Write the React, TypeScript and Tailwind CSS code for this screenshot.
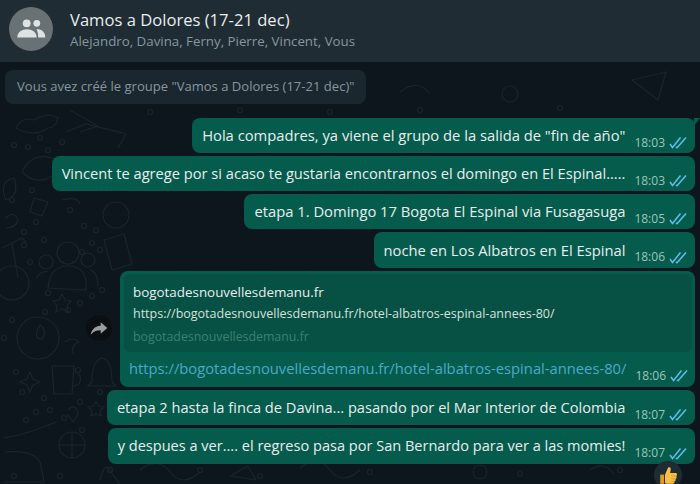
const font = { fontFamily: '"Open Sans", "Liberation Sans", sans-serif' };

function Ticks() {
    return (
        <svg width="19" height="13" viewBox="0 0 19 13" fill="none" stroke="#5cc0ea" strokeWidth="1.5" className="shrink-0">
            <path d="M1 8 L3.500 11.500 L11.500 1.500" />
            <path d="M7 11 L8 11.800 L17 1.500" />
        </svg>
    );
}

function Meta({ time }: { time: string }) {
    return (
        <div className="flex items-center gap-[4px] text-[12px] leading-none text-[#9cc4b9] ml-[9px] mt-[14px] shrink-0">
            <span>{time}</span>
            <Ticks />
        </div>
    );
}

function Bubble({ text, time, size = 'text-[14.75px]', height = 'h-[35px]' }: { text: string; time: string; size?: string; height?: string }) {
    return (
        <div className={`flex items-center ${height} ${size} rounded-[8px] bg-[#065c4c] pl-[10px] pr-[7px] text-[#e9edef] whitespace-nowrap`}>
            <span>{text}</span>
            <Meta time={time} />
        </div>
    );
}

const dots: [number, number][] = [
    [14, 145], [28, 147], [40, 138], [62, 142], [48, 150], [32, 190], [12, 200], [70, 210], [24, 232], [36, 222],
    [24, 245], [44, 240], [84, 226], [96, 230], [82, 252], [30, 262], [100, 250], [92, 243], [48, 293], [45, 312],
    [68, 310], [80, 303], [92, 296], [102, 290], [12, 320], [4, 338], [78, 370], [16, 372], [22, 392], [44, 398],
    [50, 410], [36, 412], [26, 420], [64, 418], [80, 402], [100, 392], [82, 430], [110, 470], [14, 476], [60, 476],
    [150, 112], [240, 110], [330, 112], [420, 110], [560, 108], [200, 470], [260, 476], [370, 472], [520, 474], [620, 470],
];

// chat wallpaper doodles, drawn in page coordinates
function Wallpaper() {
    return (
        <svg className="absolute inset-0 w-full h-full" fill="none" stroke="#1a252c" strokeWidth="1.2">
            <g transform="translate(0 -62)">
                {dots.map(([x, y]) => (
                    <circle key={`${x}-${y}`} cx={x} cy={y} r="2.500" />
                ))}
                <path d="M16 128 q6 -12 18 -8 q14 -8 24 -2 q-2 10 -10 10 q-14 10 -32 0" />
                <path d="M70 110 l28 16 l-18 6" />
                <path d="M66 132 l20 -8 l40 10 l-8 14" />
                <path d="M22 172 q10 -20 30 -14 q14 4 0 18 q-16 10 -30 -4 z" />
                <path d="M6 200 q-8 -18 8 -22 q6 18 -8 22" />
                <path d="M6 218 q8 -8 12 2 q-2 8 -12 8" />
                <path d="M34 198 l14 4 l-6 14 l-12 -4 z" />
                <path d="M62 200 q16 -4 18 4" />
                <circle cx="116" cy="215" r="13" />
                <path d="M104 240 l20 -6 l8 30 l-20 6 z" />
                <path d="M2 248 l20 -10 l4 4 M12 244 l6 34" />
                <circle cx="12" cy="283" r="17" />
                <circle cx="68" cy="253" r="11" />
                <circle cx="46" cy="262" r="7" />
                <circle cx="88" cy="260" r="7" />
                <path d="M48 288 q2 -22 20 -22 q20 0 18 24 z" />
                <path d="M36 278 q6 -8 12 -6 M90 270 q8 2 8 16" />
                <path d="M62 294 l3 6 l6 1 l-4 5 l1 6 l-6 -3 l-6 3 l1 -6 l-4 -5 l6 -1 z" />
                <circle cx="38" cy="338" r="21" />
                <path d="M40 325 q8 6 2 14 q-10 0 -2 -14" />
                <path d="M65 342 q8 -6 14 0 q-8 2 -6 12" />
                <path d="M52 366 h22 l-2 28 h-18 z" />
                <path d="M74 372 q8 0 6 10 q-2 4 -8 4" />
                <path d="M92 382 q0 -22 10 -24 q10 2 10 24 l4 4 h-28 z" />
                <path d="M30 372 l3 7 l7 3 l-7 3 l-3 7 l-3 -7 l-7 -3 l7 -3 z" />
                <path d="M96 402 l3 4 l5 1 l-4 4 l1 5 l-5 -2 l-5 2 l1 -5 l-4 -4 l5 -1 z" />
                <path d="M68 410 q8 -8 10 4 l-5 8 l-6 -8" />
                <path d="M4 438 q24 -4 52 -16 M4 452 q30 -2 36 10 l4 20 h-40" />
                <circle cx="72" cy="445" r="13" />
                <path d="M60 445 h24 M72 432 v26" />
                <path d="M100 480 q4 -16 8 -12 l12 16" />
                <path d="M632 80 l34 -8 l-8 28 z" />
                <path d="M140 470 q18 -14 30 2 t30 0" />
                <path d="M300 468 q18 -14 30 2 t30 0" />
                <circle cx="480" cy="472" r="7" />
                <path d="M590 470 q14 -10 24 4" />
                <path d="M400 92 q18 -14 30 2" />
                <circle cx="510" cy="94" r="8" />
                <path d="M230 476 l18 -10 l8 14 z" />
            </g>
        </svg>
    );
}

export default function App() {
    return (
        <div className="w-[700px] h-[484px] overflow-hidden flex flex-col bg-[#0c161c]" style={font}>
            {/* Header */}
            <div className="flex items-center h-[62px] shrink-0 bg-[#202c33] pl-[9px]">
                <div className="w-[44px] h-[44px] -mt-[4px] rounded-full bg-[#6a7175]">
                    <svg viewBox="0 0 44 44" className="w-full h-full" fill="#dfe2e3">
                        <circle cx="17.700" cy="16.300" r="3.900" />
                        <circle cx="27.800" cy="16.300" r="3.400" />
                        <path d="M8.300 30.500 C8.300 25 13 22.300 18 22.300 C23 22.300 27.600 25 27.600 30.500 Z" />
                        <path d="M27.500 22.300 C32 22 36.300 24.500 36.300 30.500 H29.200 C29.200 27 28.500 24.200 27.500 22.300 Z" />
                    </svg>
                </div>
                <div className="ml-[17px] -mt-[2px]">
                    <div className="text-[16.6px] leading-[22px] text-[#e9edef]">Vamos a Dolores (17-21 dec)</div>
                    <div className="text-[13.3px] leading-[19px] mt-[1px] text-[#8696a0]">Alejandro, Davina, Ferny, Pierre, Vincent, Vous</div>
                </div>
            </div>

            {/* Chat */}
            <div className="relative flex-1 min-h-0">
                <Wallpaper />
                <div className="relative flex flex-col">
                    <div className="ml-[5px] mt-[8px] self-start h-[34px] flex items-center rounded-[8px] bg-[#1b272e] px-[12px] text-[13.05px] text-[#8696a0]">
                        Vous avez créé le groupe "Vamos a Dolores (17-21 dec)"
                    </div>

                    <div className="flex flex-col items-end gap-[3px] pr-[5px] mt-[14px]">
                        <div className="relative">
                            <Bubble text={'Hola compadres, ya viene el grupo de la salida de "fin de año"'} time="18:03" />
                            <div className="absolute top-0 -right-[5px] w-0 h-0 border-t-[8px] border-t-[#065c4c] border-r-[6px] border-r-transparent" />
                        </div>
                        <Bubble size="text-[14.65px]" text="Vincent te agrege por si acaso te gustaria encontrarnos el domingo en El Espinal....." time="18:03" />
                        <Bubble text="etapa 1. Domingo 17 Bogota El Espinal via Fusagasuga" time="18:05" />
                        <Bubble height="h-[36px]" text="noche en Los Albatros en El Espinal" time="18:06" />

                        {/* Link preview */}
                        <div className="relative w-[575px] h-[116px] rounded-[8px] bg-[#065c4c] p-[3px] pl-[4px] pr-[3px]">
                            <div className="absolute -left-[34px] top-[44px] w-[26px] h-[26px] rounded-full bg-[#0b0f12] flex items-center justify-center">
                                <svg viewBox="0 0 24 24" className="w-[20px] h-[20px]" fill="#9a9ea1">
                                    <path d="M14 5 L22 12 L14 19 V14.600 C8.600 14.600 5 16.200 2 20 C3 14.500 6.500 9.800 14 9.200 Z" />
                                </svg>
                            </div>
                            <div className="h-[78px] rounded-[6px] bg-[#065144] pl-[9px] pt-[8px] whitespace-nowrap">
                                <div className="leading-[20px] text-[13.4px] text-[#e9edef]">bogotadesnouvellesdemanu.fr</div>
                                <div className="leading-[20px] mt-[2px] text-[12.5px] text-[#d5e0dc]">https://bogotadesnouvellesdemanu.fr/hotel-albatros-espinal-annees-80/</div>
                                <div className="leading-[20px] mt-[3px] text-[12.35px] text-[#3d8071]">bogotadesnouvellesdemanu.fr</div>
                            </div>
                            <div className="flex items-center h-[33px] pl-[5px] pr-[4px] justify-between text-[14.75px] whitespace-nowrap">
                                <span className="text-[#4aa9c9]">https://bogotadesnouvellesdemanu.fr/hotel-albatros-espinal-annees-80/</span>
                                <Meta time="18:06" />
                            </div>
                        </div>

                        <Bubble size="text-[14.63px]" text="etapa 2 hasta la finca de Davina... pasando por el Mar Interior de Colombia" time="18:07" />
                        <div className="relative">
                            <Bubble size="text-[14.55px]" height="h-[36px]" text="y despues a ver.... el regreso pasa por San Bernardo para ver a las momies!" time="18:07" />
                            <div className="absolute -bottom-[25px] right-[13px] w-[28px] h-[28px] rounded-full bg-[#202c33] flex items-center justify-center">
                                <svg viewBox="0 0 24 24" className="w-[21px] h-[21px]">
                                    <path fill="#e39a1f" d="M2.500 11 h4.500 v10.500 h-4.500 z" />
                                    <path fill="#f7bf45" d="M8 11 L11.500 2.800 C13.800 1.800 15 3.500 14.500 5.500 L13.800 9 H20 C22.200 9 22.200 12 20.700 12.500 C21.800 13.500 21.300 15.500 20 15.700 C20.600 16.900 20 18.500 18.800 18.700 C19.100 20 18.300 21.500 16.800 21.500 H11.500 C9.500 21.500 8 21 8 20.500 Z" />
                                    <path fill="none" stroke="#d98a16" strokeWidth="0.8" d="M15 12.500 H20.700 M15 15.700 H20 M15 18.700 H18.800" />
                                </svg>
                            </div>
                        </div>
                    </div>
                </div>
            </div>
        </div>
    );
}
